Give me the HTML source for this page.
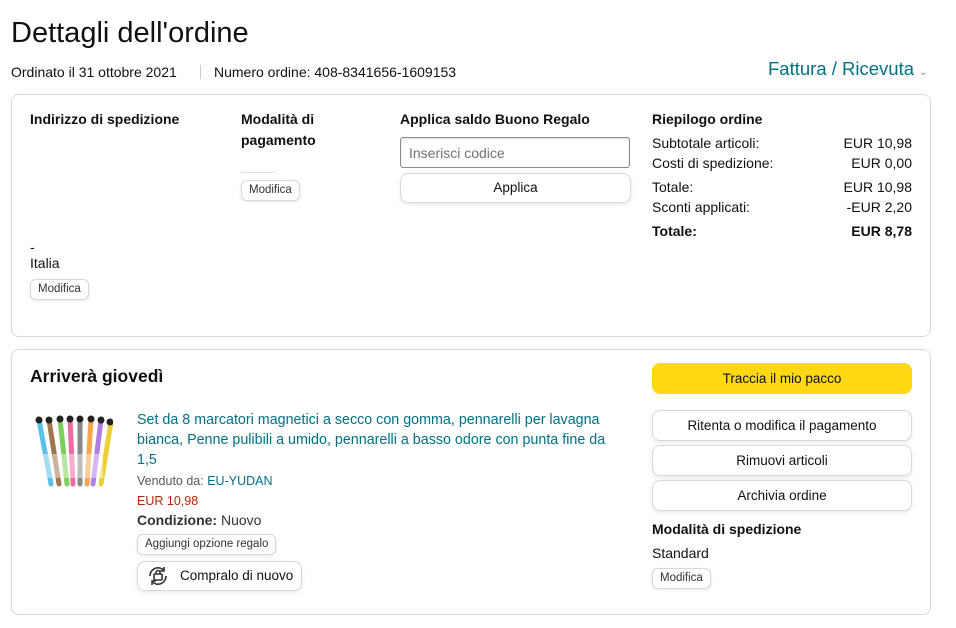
<!DOCTYPE html>
<html><head><meta charset="utf-8"><style>
*{margin:0;padding:0;box-sizing:border-box}
body{width:956px;height:628px;background:#fff;font-family:"Liberation Sans","DejaVu Sans",sans-serif;color:#0f1111;position:relative;overflow:hidden;font-size:14px}
.a{position:absolute;white-space:nowrap}
.b{font-weight:bold}
.box{position:absolute;border:1px solid #d5d9d9;border-radius:8px}
.btn{position:absolute;border:1px solid #d5d9d9;border-radius:8px;background:#fff;box-shadow:0 2px 5px rgba(213,217,217,.5);text-align:center;font-size:13.5px}
.sm{position:absolute;border:1px solid #d5d9d9;border-radius:6px;background:#fff;box-shadow:0 1px 3px rgba(213,217,217,.6);font-size:11.5px;padding:0 7px;height:21px;line-height:19px;color:#333}
.r{text-align:right}
</style></head><body>
<div class="a" style="left:11px;top:17px;font-size:29px;">Dettagli dell'ordine</div>
<div class="a" style="left:11px;top:64px;font-size:14px;">Ordinato il 31 ottobre 2021</div>
<div class="a" style="left:200px;top:65px;width:1px;height:14px;background:#ccc"></div>
<div class="a" style="left:214px;top:64px;font-size:14px;">Numero ordine: 408-8341656-1609153</div>
<div class="a" style="left:768px;top:58px;font-size:18.5px;color:#007185">Fattura / Ricevuta <span style="font-size:10px;color:#888">&#8964;</span></div>

<div class="box" style="left:11px;top:94px;width:920px;height:243px"></div>
<div class="a b" style="left:30px;top:111px">Indirizzo di spedizione</div>
<div class="a" style="left:30px;top:239px">-</div>
<div class="a" style="left:30px;top:255px">Italia</div>
<div class="sm" style="left:30px;top:279px">Modifica</div>

<div class="a b" style="left:241px;top:109px;line-height:21px">Modalità di<br>pagamento</div>
<div class="a" style="left:241px;top:172px;width:34px;height:1px;background:#ddd"></div>
<div class="sm" style="left:241px;top:180px">Modifica</div>

<div class="a b" style="left:400px;top:111px">Applica saldo Buono Regalo</div>
<div class="a" style="left:400px;top:137px;width:230px;height:31px;border:1px solid #888c8c;border-radius:3px;box-shadow:inset 0 1px 2px rgba(15,17,17,.15);padding:7px 8px;color:#6f7373">Inserisci codice</div>
<div class="btn" style="left:400px;top:173px;width:231px;height:30px;line-height:28px">Applica</div>

<div class="a b" style="left:652px;top:111px">Riepilogo ordine</div>
<div class="a" style="left:652px;top:135px">Subtotale articoli:</div><div class="a r" style="left:812px;width:100px;top:135px">EUR 10,98</div>
<div class="a" style="left:652px;top:155px">Costi di spedizione:</div><div class="a r" style="left:812px;width:100px;top:155px">EUR 0,00</div>
<div class="a" style="left:652px;top:179px">Totale:</div><div class="a r" style="left:812px;width:100px;top:179px">EUR 10,98</div>
<div class="a" style="left:652px;top:199px">Sconti applicati:</div><div class="a r" style="left:812px;width:100px;top:199px">-EUR 2,20</div>
<div class="a b" style="left:652px;top:223px">Totale:</div><div class="a r b" style="left:812px;width:100px;top:223px">EUR 8,78</div>

<div class="box" style="left:11px;top:349px;width:920px;height:266px"></div>
<div class="a b" style="left:30px;top:366px;font-size:17.5px">Arriverà giovedì</div>
<svg class="a" style="left:33px;top:414px" width="80" height="80" viewBox="0 0 80 80">
<g stroke-width="5" stroke-linecap="round">
<line x1="6" y1="6" x2="18" y2="70" stroke="#5bc0e8"/><line x1="16" y1="6" x2="26" y2="70" stroke="#a0764e"/><line x1="27" y1="5" x2="34" y2="70" stroke="#7cd05a"/><line x1="37" y1="5" x2="40" y2="70" stroke="#ee6aa0"/><line x1="47" y1="5" x2="47" y2="70" stroke="#888"/><line x1="58" y1="5" x2="54" y2="70" stroke="#f3a64e"/><line x1="68" y1="6" x2="60" y2="70" stroke="#b07ee0"/><line x1="78" y1="8" x2="68" y2="70" stroke="#ecd03a"/>
</g>
<g fill="#222"><circle cx="6" cy="6" r="3.5"/><circle cx="16" cy="6" r="3.5"/><circle cx="27" cy="5" r="3.5"/><circle cx="37" cy="5" r="3.5"/><circle cx="47" cy="5" r="3.5"/><circle cx="58" cy="5" r="3.5"/><circle cx="68" cy="6" r="3.5"/><circle cx="77" cy="8" r="3.5"/></g>
<rect x="10" y="40" width="60" height="24" fill="#fff" opacity=".45"/>
</svg>
<div class="a" style="left:137px;top:410px;font-size:14.3px;line-height:20px;color:#007185;white-space:normal;width:480px">Set da 8 marcatori magnetici a secco con gomma, pennarelli per lavagna bianca, Penne pulibili a umido, pennarelli a basso odore con punta fine da 1,5</div>
<div class="a" style="left:137px;top:474px;font-size:12.5px;color:#565959">Venduto da: <span style="color:#007185">EU-YUDAN</span></div>
<div class="a" style="left:137px;top:494px;font-size:12.5px;color:#b12704">EUR 10,98</div>
<div class="a" style="left:137px;top:512px;font-size:14px;color:#333"><b>Condizione:</b> Nuovo</div>
<div class="sm" style="left:137px;top:534px">Aggiungi opzione regalo</div>
<div class="btn" style="left:137px;top:561px;width:165px;height:30px;line-height:28px;text-align:left;padding-left:42px">Compralo di nuovo</div>
<svg class="a" style="left:146px;top:565px" width="24" height="22" viewBox="0 0 24 22" fill="none" stroke="#333" stroke-width="1.6"><path d="M4 11a8 8 0 0 1 14-5.5"/><path d="M20 11a8 8 0 0 1-14 5.5"/><path d="M18 2v4h-4M6 20v-4h4"/><rect x="8" y="9" width="8" height="6" rx="1"/><path d="M10 9V7.5a2 2 0 0 1 4 0V9"/></svg>

<div class="a" style="left:652px;top:363px;width:260px;height:31px;background:#ffd814;border-radius:8px;text-align:center;line-height:31px;font-size:13.5px">Traccia il mio pacco</div>
<div class="btn" style="left:652px;top:410px;width:260px;height:31px;line-height:29px">Ritenta o modifica il pagamento</div>
<div class="btn" style="left:652px;top:445px;width:260px;height:31px;line-height:29px">Rimuovi articoli</div>
<div class="btn" style="left:652px;top:480px;width:260px;height:31px;line-height:29px">Archivia ordine</div>
<div class="a b" style="left:652px;top:521px">Modalità di spedizione</div>
<div class="a" style="left:652px;top:545px">Standard</div>
<div class="sm" style="left:652px;top:568px">Modifica</div>
</body></html>
